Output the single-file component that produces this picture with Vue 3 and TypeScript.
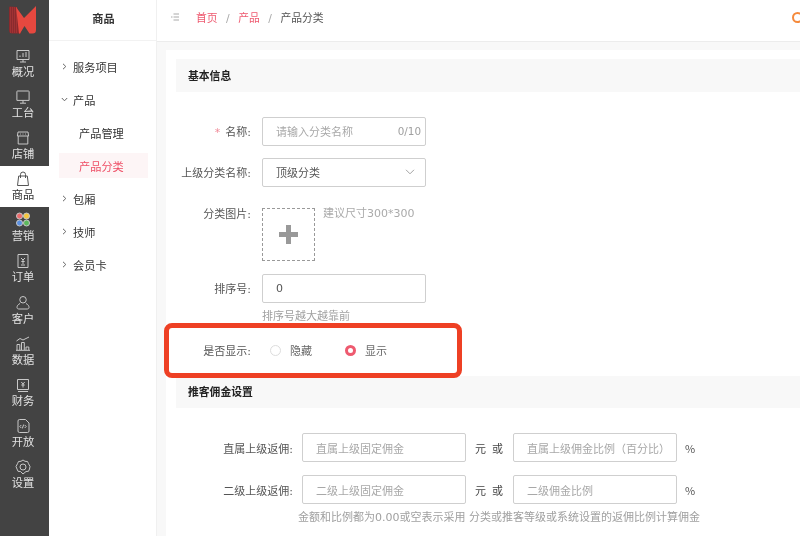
<script setup lang="ts">
interface NavItem { label: string; paths: string[]; active?: boolean; colorful?: boolean }
const nav: NavItem[] = [
  { label: '概况', paths: ['M2 2.500h12v9H2z', 'M8 11.500v2.500M5 14h6', 'M5 9V7.500M8 9V5M11 9V4'] },
  { label: '工台', paths: ['M2.500 2h11a.6.6 0 0 1 .6.6v8.800H1.900V2.600A.6.6 0 0 1 2.500 2z', 'M8 11.500V14M5 14.200h6'] },
  { label: '店铺', paths: ['M3 2h10l.6 4H2.400z', 'M3.200 6v8h9.600V6', 'M5 4h.8M7.600 4h.8M10.200 4h.8'] },
  { label: '商品', paths: ['M3.700 5h8.600l1.200 9.500h-11z', 'M5.500 7V3.500a2.500 2.500 0 0 1 5 0V7'], active: true },
  { label: '营销', paths: [], colorful: true },
  { label: '订单', paths: ['M3 1.500h10v13H3z', 'M6 5l2 2 2-2M8 7v4M6.300 8.500h3.400M6 12h4'] },
  { label: '客户', paths: ['M8 1.500a3.250 3.250 0 1 1 0 6.500a3.250 3.250 0 1 1 0-6.500z', 'M5 8.500C3 9.500 2 10.800 2 12.500c0 1.200 1 1.500 2 1.500h8c1 0 2-.3 2-1.500 0-1.700-1-3-3-4'] },
  { label: '数据', paths: ['M1.500 5L5 2.500l3 1.500L14 1', 'M2 14V8.500h2.800V14M6.500 14V6.500h2.800V14M11 14v-3h2.800v3M1 14.300h14'] },
  { label: '财务', paths: ['M2.500 2.500h11v10h-11z', 'M3 14.500h10', 'M6.300 5L8 7l1.700-2M8 7v3.500M6.300 8h3.400'] },
  { label: '开放', paths: ['M3 3a1.500 1.500 0 0 1 1.500-1.500h6L14 5v8a1.500 1.500 0 0 1-1.500 1.500h-8A1.500 1.500 0 0 1 3 13z', 'M6.300 7L4.800 8.500l1.500 1.500M9.700 7l1.500 1.500-1.500 1.500M8.700 6.500L7.300 10.500'] },
  { label: '设置', paths: ['M8 1l2 1.300 2.500.2 1 2.200L15 7.500 14.500 10l-1 2.300-2.500.2L8 15l-2.500-2.500-2.500-.2-1-2.300L1 7.500l1.500-2.800 1-2.200 2.500-.2z', 'M8 5a3 3 0 1 1 0 6a3 3 0 1 1 0-6z'] },
];
const menu = [
  { label: '服务项目', arrow: 'right' },
  { label: '产品', arrow: 'down' },
  { label: '产品管理', sub: true },
  { label: '产品分类', sub: true, active: true },
  { label: '包厢', arrow: 'right' },
  { label: '技师', arrow: 'right' },
  { label: '会员卡', arrow: 'right' },
];
const stripes = [2.500, 4.500, 6.500, 8.500];
</script>

<template>
  <div class="page">
    <aside class="rail">
      <div class="logo">
        <svg width="30" height="30" viewBox="0 0 30 30">
          <path d="M1 2.500 Q1 1.500 2 1.500L9 2 13 28.500H4Q1 28.500 1 25z" fill="#8a2a2d" />
          <path v-for="x in stripes" :key="x" :d="`M${x} 2V28`" stroke="#a63536" stroke-width=".8" fill="none" />
          <path d="M8 2L16 13 28 1V25Q28 28.500 24.500 28.500H21.500L16.500 21 12 28.500H11Z" fill="#e6483f" />
        </svg>
      </div>
      <div v-for="n in nav" :key="n.label" class="rail-item" :class="{ on: n.active }">
        <svg class="rail-icon" width="16" height="16" viewBox="0 0 16 16" fill="none" stroke-width="1">
          <template v-if="n.colorful">
            <circle cx="4.500" cy="4" r="3" fill="#ea6a6c" />
            <circle cx="11.500" cy="4" r="3" fill="#f4c63d" />
            <circle cx="4.500" cy="11" r="3" fill="#5a8fe0" />
            <circle cx="11.500" cy="11" r="3" fill="#5cb85c" />
          </template>
          <path v-for="p in n.paths" :key="p" :d="p" />
        </svg>
        <span>{{ n.label }}</span>
      </div>
    </aside>

    <nav class="menu">
      <div class="menu-title">商品</div>
      <ul class="menu-list">
        <li v-for="m in menu" :key="m.label" class="menu-row" :class="{ sub: m.sub, active: m.active }">
          <svg v-if="m.arrow" class="chev" width="7" height="7" viewBox="0 0 7 7" fill="none">
            <path v-if="m.arrow === 'right'" d="M2 .8L4.800 3.500 2 6.200" />
            <path v-else d="M.8 2L3.500 4.800 6.200 2" />
          </svg>
          <span>{{ m.label }}</span>
        </li>
      </ul>
    </nav>

    <div class="body">
      <header class="top">
        <svg class="fold" width="8" height="8" viewBox="0 0 8 8" fill="none">
          <path d="M2.500 1H8M2.500 4H8M2.500 7H8M0 4h1.500" />
        </svg>
        <div class="crumbs">
          <span class="link">首页</span><i>/</i><span class="link">产品</span><i>/</i><span>产品分类</span>
        </div>
        <span class="ring"></span>
      </header>

      <main class="main">
        <section class="card">
          <h2 class="head">基本信息</h2>

          <div class="row r-name">
            <label class="lab"><em>*</em>名称:</label>
            <div class="box ph"><span>请输入分类名称</span><small>0/10</small></div>
          </div>
          <div class="row r-parent">
            <label class="lab">上级分类名称:</label>
            <div class="box val">
              <span>顶级分类</span>
              <svg width="10" height="6" viewBox="0 0 10 6" fill="none"><path d="M1 .8L5 4.800 9 .8" stroke="#999" stroke-width=".9" /></svg>
            </div>
          </div>
          <div class="row r-pic">
            <label class="lab lab-top">分类图片:</label>
            <div class="upload"><span class="plus"></span></div>
            <span class="tip">建议尺寸300*300</span>
          </div>
          <div class="row r-sort">
            <label class="lab">排序号:</label>
            <div class="box val">0</div>
          </div>
          <p class="help">排序号越大越靠前</p>
          <div class="row r-show">
            <label class="lab">是否显示:</label>
            <span class="radio"></span><span class="radio-text">隐藏</span>
            <span class="radio checked"></span><span class="radio-text">显示</span>
          </div>

          <h2 class="head head2">推客佣金设置</h2>

          <div class="row2 first">
            <label class="lab2">直属上级返佣:</label>
            <div class="box ph"><span>直属上级固定佣金</span></div>
            <span class="unit">元</span><span class="or">或</span>
            <div class="box ph"><span>直属上级佣金比例（百分比）</span></div>
            <span class="pct">%</span>
          </div>
          <div class="row2">
            <label class="lab2">二级上级返佣:</label>
            <div class="box ph"><span>二级上级固定佣金</span></div>
            <span class="unit">元</span><span class="or">或</span>
            <div class="box ph"><span>二级佣金比例</span></div>
            <span class="pct">%</span>
          </div>
          <p class="help2">金额和比例都为0.00或空表示采用 分类或推客等级或系统设置的返佣比例计算佣金</p>
        </section>
      </main>
    </div>

    <div class="mark"></div>
  </div>
</template>

<style>
html, body { margin: 0; background: #fff; }
</style>

<style scoped>
* { box-sizing: border-box; }
.page {
  position: relative;
  display: flex;
  width: 800px;
  height: 536px;
  overflow: hidden;
  font-family: "DejaVu Sans", "Noto Sans CJK SC", sans-serif;
  font-size: 11px;
  color: #444;
  background: #fff;
  filter: blur(0.25px);
}
.rail { width: 49px; flex: none; background: #434343; color: #e2e2e2; }
.logo { height: 43px; padding: 5px 0 0 8px; }
.logo svg { display: block; }
.rail-item {
  height: 41.100px;
  display: flex;
  flex-direction: column;
  align-items: center;
  padding-top: 5px;
  font-size: 11.300px;
  line-height: 15px;
  stroke: #c8c8c8;
}
.rail-item span { stroke: none; margin-top: 1px; margin-left: -3px; }
.rail-icon { display: block; margin-left: -4px; stroke: inherit; }
.rail-item.on { background: #fff; color: #333; stroke: #555; }
.menu { width: 108px; flex: none; border-right: 1px solid #f0f0f0; }
.menu-title {
  height: 41px;
  text-align: center;
  line-height: 40px;
  font-size: 11.200px;
  font-weight: 700;
  color: #333;
  border-bottom: 1px solid #f2f2f2;
  padding-left: 2px;
}
.menu-list { list-style: none; margin: 0; padding: 9px 0 0 10px; }
.menu-row {
  position: relative;
  height: 33px;
  display: flex;
  align-items: center;
  padding-left: 14px;
  font-size: 11.200px;
  color: #333;
}
.menu-row .chev { position: absolute; left: 2px; top: 13px; stroke: #666; }
.menu-row.sub { padding-left: 20px; }
.menu-row.active { color: #ee4f66; }
.menu-row.active::before {
  content: "";
  position: absolute;
  left: 0;
  top: 4px;
  width: 89px;
  height: 25px;
  background: #fdf5f6;
}
.menu-row span { position: relative; }
.body { flex: 1; min-width: 0; display: flex; flex-direction: column; background: #f8f8f8; }
.top {
  height: 42px;
  flex: none;
  display: flex;
  align-items: center;
  background: #fff;
  border-bottom: 1px solid #ececec;
  padding: 0 0 7px 14px;
}
.fold { stroke: #aaa; }
.crumbs { margin-left: 17px; font-size: 10.800px; color: #555; flex: 1; }
.crumbs .link { color: #ee5a70; }
.crumbs i { font-style: normal; color: #aaa; margin: 0 8.500px; }
.ring {
  width: 11px;
  height: 11px;
  flex: none;
  margin-right: -3px;
  border: 2px solid #f58a3c;
  border-radius: 50%;
}
.main { flex: 1; padding: 8px 0 0 9px; }
.card { background: #fff; height: 100%; padding: 9px 0 0 10px; }
.head {
  margin: 0;
  height: 33px;
  background: #f8f8f8;
  padding: 1px 0 0 12px;
  font-size: 10.800px;
  font-weight: 700;
  line-height: 33px;
  color: #222;
}
.row { display: flex; align-items: center; }
.lab { width: 86px; flex: none; padding-right: 11px; text-align: right; color: #555; white-space: nowrap; }
.lab em { font-style: normal; color: #f08a98; margin-right: 5px; }
.lab-top { align-self: flex-start; line-height: 13px; }
.box {
  width: 164px;
  height: 28.500px;
  flex: none;
  border: 1px solid #cfcfcf;
  border-radius: 2px;
  display: flex;
  align-items: center;
  justify-content: space-between;
  padding: 0 4px 0 13px;
  background: #fff;
}
.ph { color: #a8a8a8; }
.ph small { font-size: 10.400px; color: #a0a0a0; }
.val { color: #555; padding-right: 10px; }
.r-name { margin-top: 25px; }
.r-parent { margin-top: 12.500px; }
.r-pic { margin-top: 21px; align-items: flex-start; }
.r-sort { margin-top: 13.500px; }
.upload {
  width: 53px;
  height: 53px;
  flex: none;
  border: 1px dashed #999;
  display: flex;
  align-items: center;
  justify-content: center;
}
.plus {
  display: block;
  width: 19px;
  height: 19px;
  background:
    linear-gradient(#999, #999) center / 19px 5px no-repeat,
    linear-gradient(#999, #999) center / 5px 19px no-repeat;
}
.tip { margin-left: 8px; margin-top: -2px; color: #aaa; line-height: 15px; }
.help { margin: 6px 0 0 86px; color: #a0a0a0; line-height: 16px; }
.r-show { margin-top: 17.500px; height: 16px; }
.radio {
  width: 11px;
  height: 11px;
  flex: none;
  margin-left: 8px;
  border: 1px solid #ddd;
  border-radius: 50%;
}
.radio.checked { margin-left: 34px; border: 3.500px solid #ee5a6f; background: #fff; }
.radio-text { margin-left: 9px; color: #666; width: 21px; white-space: nowrap; }
.head2 { margin-top: 18px; height: 32px; line-height: 32px; }
.row2 { display: flex; align-items: center; height: 29px; }
.row2 .box { height: 29px; }
.row2.first { margin-top: 25px; }
.row2 + .row2 { margin-top: 13px; }
.lab2 { width: 126px; flex: none; padding-right: 9px; text-align: right; color: #555; white-space: nowrap; }
.unit { margin-left: 9px; width: 17px; color: #444; }
.or { width: 21px; color: #444; }
.pct { margin-left: 8px; color: #555; font-family: "Noto Sans CJK SC", sans-serif; }
.help2 { margin: 5.500px 0 0 122px; color: #a0a0a0; line-height: 16px; white-space: nowrap; }
.mark {
  position: absolute;
  left: 164px;
  top: 323px;
  width: 298px;
  height: 55px;
  border: 5px solid #ee4024;
  border-radius: 8px;
  pointer-events: none;
}
</style>
